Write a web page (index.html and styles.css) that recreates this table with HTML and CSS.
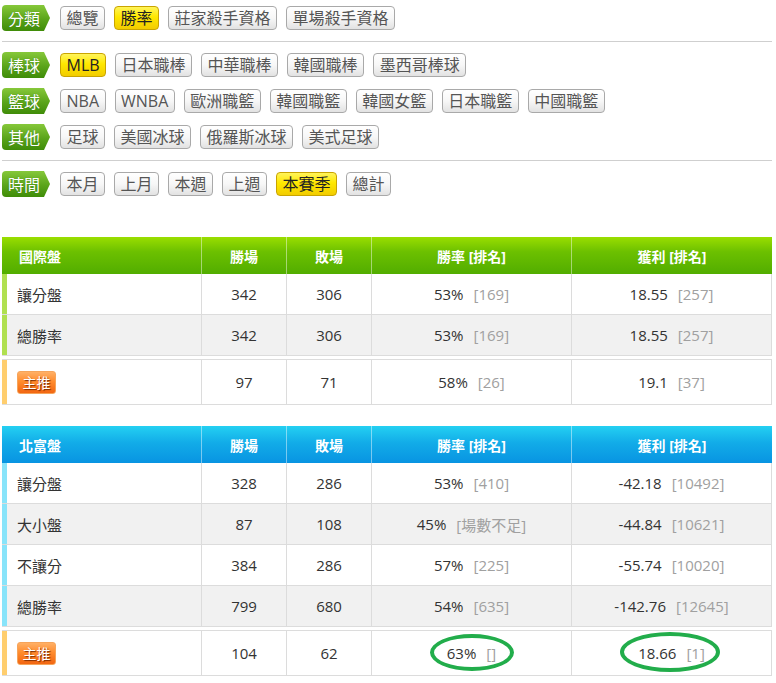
FILE: index.html
```html
<!DOCTYPE html>
<html lang="zh-Hant">
<head>
<meta charset="utf-8">
<title>勝率</title>
<link rel="stylesheet" href="styles.css">
</head>
<body>
<div class="page">
  <div class="filters">
    <div class="frow">
      <span class="tag">分類</span>
      <div class="btns">
        <span class="btn">總覽</span><span class="btn on">勝率</span><span class="btn">莊家殺手資格</span><span class="btn">單場殺手資格</span>
      </div>
    </div>
    <hr class="sep">
    <div class="fgroup">
      <div class="frow">
        <span class="tag">棒球</span>
        <div class="btns">
          <span class="btn on">MLB</span><span class="btn">日本職棒</span><span class="btn">中華職棒</span><span class="btn">韓國職棒</span><span class="btn">墨西哥棒球</span>
        </div>
      </div>
      <div class="frow">
        <span class="tag">籃球</span>
        <div class="btns">
          <span class="btn">NBA</span><span class="btn">WNBA</span><span class="btn">歐洲職籃</span><span class="btn">韓國職籃</span><span class="btn">韓國女籃</span><span class="btn">日本職籃</span><span class="btn">中國職籃</span>
        </div>
      </div>
      <div class="frow">
        <span class="tag">其他</span>
        <div class="btns">
          <span class="btn">足球</span><span class="btn">美國冰球</span><span class="btn">俄羅斯冰球</span><span class="btn">美式足球</span>
        </div>
      </div>
    </div>
    <hr class="sep">
    <div class="frow">
      <span class="tag">時間</span>
      <div class="btns">
        <span class="btn">本月</span><span class="btn">上月</span><span class="btn">本週</span><span class="btn">上週</span><span class="btn on">本賽季</span><span class="btn">總計</span>
      </div>
    </div>
  </div>

  <section class="board green">
    <div class="row head">
      <div class="c first">國際盤</div><div class="c">勝場</div><div class="c">敗場</div><div class="c">勝率 [排名]</div><div class="c">獲利 [排名]</div>
    </div>
    <div class="row">
      <div class="c first">讓分盤</div><div class="c">342</div><div class="c">306</div><div class="c">53%<span class="rk">[169]</span></div><div class="c">18.55<span class="rk">[257]</span></div>
    </div>
    <div class="row alt">
      <div class="c first">總勝率</div><div class="c">342</div><div class="c">306</div><div class="c">53%<span class="rk">[169]</span></div><div class="c">18.55<span class="rk">[257]</span></div>
    </div>
    <div class="row pick">
      <div class="c first"><span class="badge">主推</span></div><div class="c">97</div><div class="c">71</div><div class="c">58%<span class="rk">[26]</span></div><div class="c">19.1<span class="rk">[37]</span></div>
    </div>
  </section>

  <section class="board blue">
    <div class="row head">
      <div class="c first">北富盤</div><div class="c">勝場</div><div class="c">敗場</div><div class="c">勝率 [排名]</div><div class="c">獲利 [排名]</div>
    </div>
    <div class="row">
      <div class="c first">讓分盤</div><div class="c">328</div><div class="c">286</div><div class="c">53%<span class="rk">[410]</span></div><div class="c">-42.18<span class="rk">[10492]</span></div>
    </div>
    <div class="row alt">
      <div class="c first">大小盤</div><div class="c">87</div><div class="c">108</div><div class="c">45%<span class="rk">[場數不足]</span></div><div class="c">-44.84<span class="rk">[10621]</span></div>
    </div>
    <div class="row">
      <div class="c first">不讓分</div><div class="c">384</div><div class="c">286</div><div class="c">57%<span class="rk">[225]</span></div><div class="c">-55.74<span class="rk">[10020]</span></div>
    </div>
    <div class="row alt">
      <div class="c first">總勝率</div><div class="c">799</div><div class="c">680</div><div class="c">54%<span class="rk">[635]</span></div><div class="c">-142.76<span class="rk">[12645]</span></div>
    </div>
    <div class="row pick">
      <div class="c first"><span class="badge">主推</span></div><div class="c">104</div><div class="c">62</div><div class="c mark">63%<span class="rk">[]</span><span class="ring small"></span></div><div class="c mark">18.66<span class="rk">[1]</span><span class="ring big"></span></div>
    </div>
  </section>
</div>
</body>
</html>
```
FILE: styles.css
```css
html, body {
  margin: 0;
  padding: 0;
  background: #fff;
}
body {
  font-family: "Open Sans", "Noto Sans CJK TC", sans-serif;
  color: #333;
}
.page {
  width: 770px;
  margin-left: 2px;
  padding-top: 5px;
}
.filters {
  display: flex;
  flex-direction: column;
}
.fgroup {
  display: flex;
  flex-direction: column;
  gap: 10px;
}
.frow {
  display: flex;
  align-items: center;
  height: 26px;
}
.tag {
  box-sizing: border-box;
  width: 48px;
  height: 26px;
  line-height: 26px;
  padding-left: 6px;
  color: #fff;
  font-size: 16px;
  font-family: "Noto Sans CJK TC", sans-serif;
  background: linear-gradient(#86c83a, #5aa41a 55%, #3f8c08);
  border-radius: 4px 0 0 4px;
  clip-path: polygon(0 0, 42px 0, 48px 50%, 42px 100%, 0 100%);
  text-shadow: 0 0 1px rgba(0,60,0,0.4);
  flex: none;
}
.btns {
  display: flex;
  gap: 9px;
  margin-left: 10px;
}
.btn {
  box-sizing: border-box;
  height: 24px;
  line-height: 22px;
  padding: 0 5.5px;
  font-size: 16px;
  color: #555;
  border: 1px solid #a9a9a9;
  border-radius: 4px;
  background: linear-gradient(#ffffff, #f7f7f7 50%, #e2e2e2);
  white-space: nowrap;
}
.btn.on {
  color: #222;
  border-color: #c9a400;
  background: linear-gradient(#fff45a, #ffe800 45%, #f2cc00);
}
.sep {
  border: 0;
  border-top: 1px solid #cfcfcf;
  margin: 10px 0 10px;
  height: 0;
}

.board {
  margin-top: 40px;
}
.board.blue {
  margin-top: 21px;
}
.row {
  display: grid;
  grid-template-columns: 200px 85px 85px 200px 200px;
  height: 41px;
  box-sizing: border-box;
  border-bottom: 1px solid #dcdcdc;
  background: #fff;
  font-size: 15px;
}
.row.alt {
  background: #f1f1f1;
}
.c {
  display: flex;
  align-items: center;
  justify-content: center;
  border-right: 1px solid #dcdcdc;
  position: relative;
  white-space: nowrap;
}
.c.first {
  justify-content: flex-start;
  padding-left: 10px;
  border-left: 5px solid #b0e050;
}
.blue .c.first {
  border-left-color: #88e4fa;
}
.row.pick {
  height: 46px;
  margin-top: 3px;
  border-top: 1px solid #dcdcdc;
}
.row.pick .c.first {
  border-left-color: #ffce6e;
  padding-left: 10px;
}
.row.head {
  height: 37px;
  border-bottom: 0;
  color: #fff;
  font-weight: bold;
  font-size: 14px;
}
.row.head .c {
  border-right: 1px solid rgba(255,255,255,0.45);
}
.row.head .c:last-child {
  border-right: 0;
}
.row.head .c.first {
  border-left: 0;
  padding-left: 17px;
}
.green .row.head {
  background: linear-gradient(#9ade00, #6cc000 40%, #52ad00);
}
.blue .row.head {
  background: linear-gradient(#24d0f2, #12ace8 45%, #0894e2);
}
.rk {
  color: #a0a0a0;
  margin-left: 10px;
}
.badge {
  display: inline-block;
  box-sizing: border-box;
  width: 39px;
  height: 23px;
  line-height: 21px;
  text-align: center;
  font-size: 14px;
  color: #fff;
  font-family: "Noto Sans CJK TC", sans-serif;
  border: 1px solid #f6a45a;
  border-radius: 3px;
  background: linear-gradient(#ffb066, #ff8c2e 45%, #f26612);
  text-shadow: 1px 1px 1px #7a2a00;
}
.ring {
  position: absolute;
  top: 50%;
  left: 50%;
  box-sizing: border-box;
  border: 4px solid #22ad4b;
  border-radius: 50%;
}
.ring.small {
  width: 84px;
  height: 37px;
  margin-left: -42px;
  margin-top: -19px;
}
.ring.big {
  width: 100px;
  height: 40px;
  margin-left: -52px;
  margin-top: -21px;
}
```
